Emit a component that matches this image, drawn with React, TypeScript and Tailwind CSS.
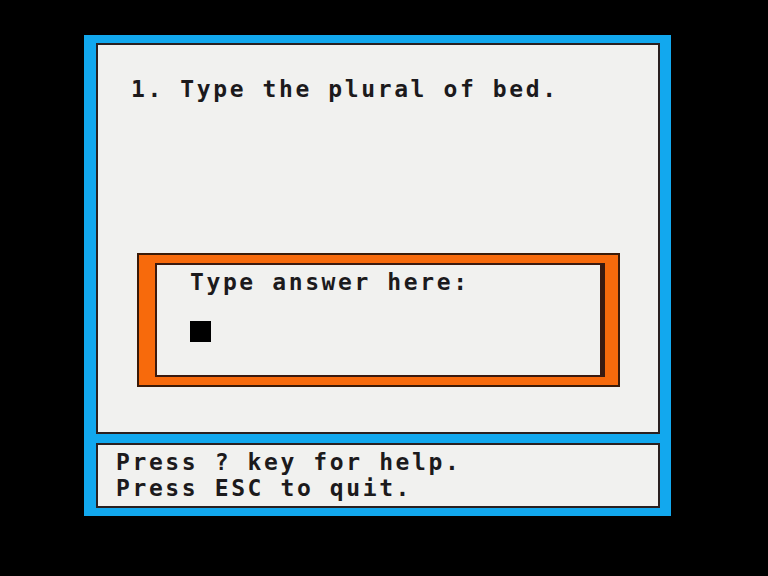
export default function App() {
  const mono = "font-['DejaVu_Sans_Mono',monospace] font-bold text-[23px] leading-[26px] tracking-[2.6px] text-[#1c1a1c] whitespace-pre";

  return (
    <div className="w-[768px] h-[576px] bg-black pt-[35px] pl-[84px]">
      {/* blue outer frame */}
      <div className="w-[587px] h-[481px] bg-[#12a8ee] pt-[8px] pl-[12px] pr-[11px] pb-[8px] flex flex-col gap-[9px]">
        {/* question panel */}
        <div className="h-[391px] border-2 border-[#2a2020] bg-[#f1f1ef] pt-[31px] pl-[33px]">
          <div className={mono}>1. Type the plural of bed.</div>

          {/* answer box */}
          <div className="mt-[151px] ml-[6px] w-[483px] h-[134px] border-2 border-[#3a1a08] bg-[#f76a0c] pt-[8px] pl-[16px] pr-[13px] pb-[8px]">
            <div className="h-full border-2 border-r-[5px] border-[#3a1a10] bg-[#f1f1ef] pt-[4px] pl-[33px]">
              <div className={mono}>Type answer here:</div>
              <div className="mt-[26px] w-[21px] h-[21px] bg-black" />
            </div>
          </div>
        </div>

        {/* help panel */}
        <div className="flex-1 border-2 border-[#2a2020] bg-[#f1f1ef] pt-[4px] pl-[18px]">
          <div className={mono}>Press ? key for help.</div>
          <div className={mono}>Press ESC to quit.</div>
        </div>
      </div>
    </div>
  );
}
